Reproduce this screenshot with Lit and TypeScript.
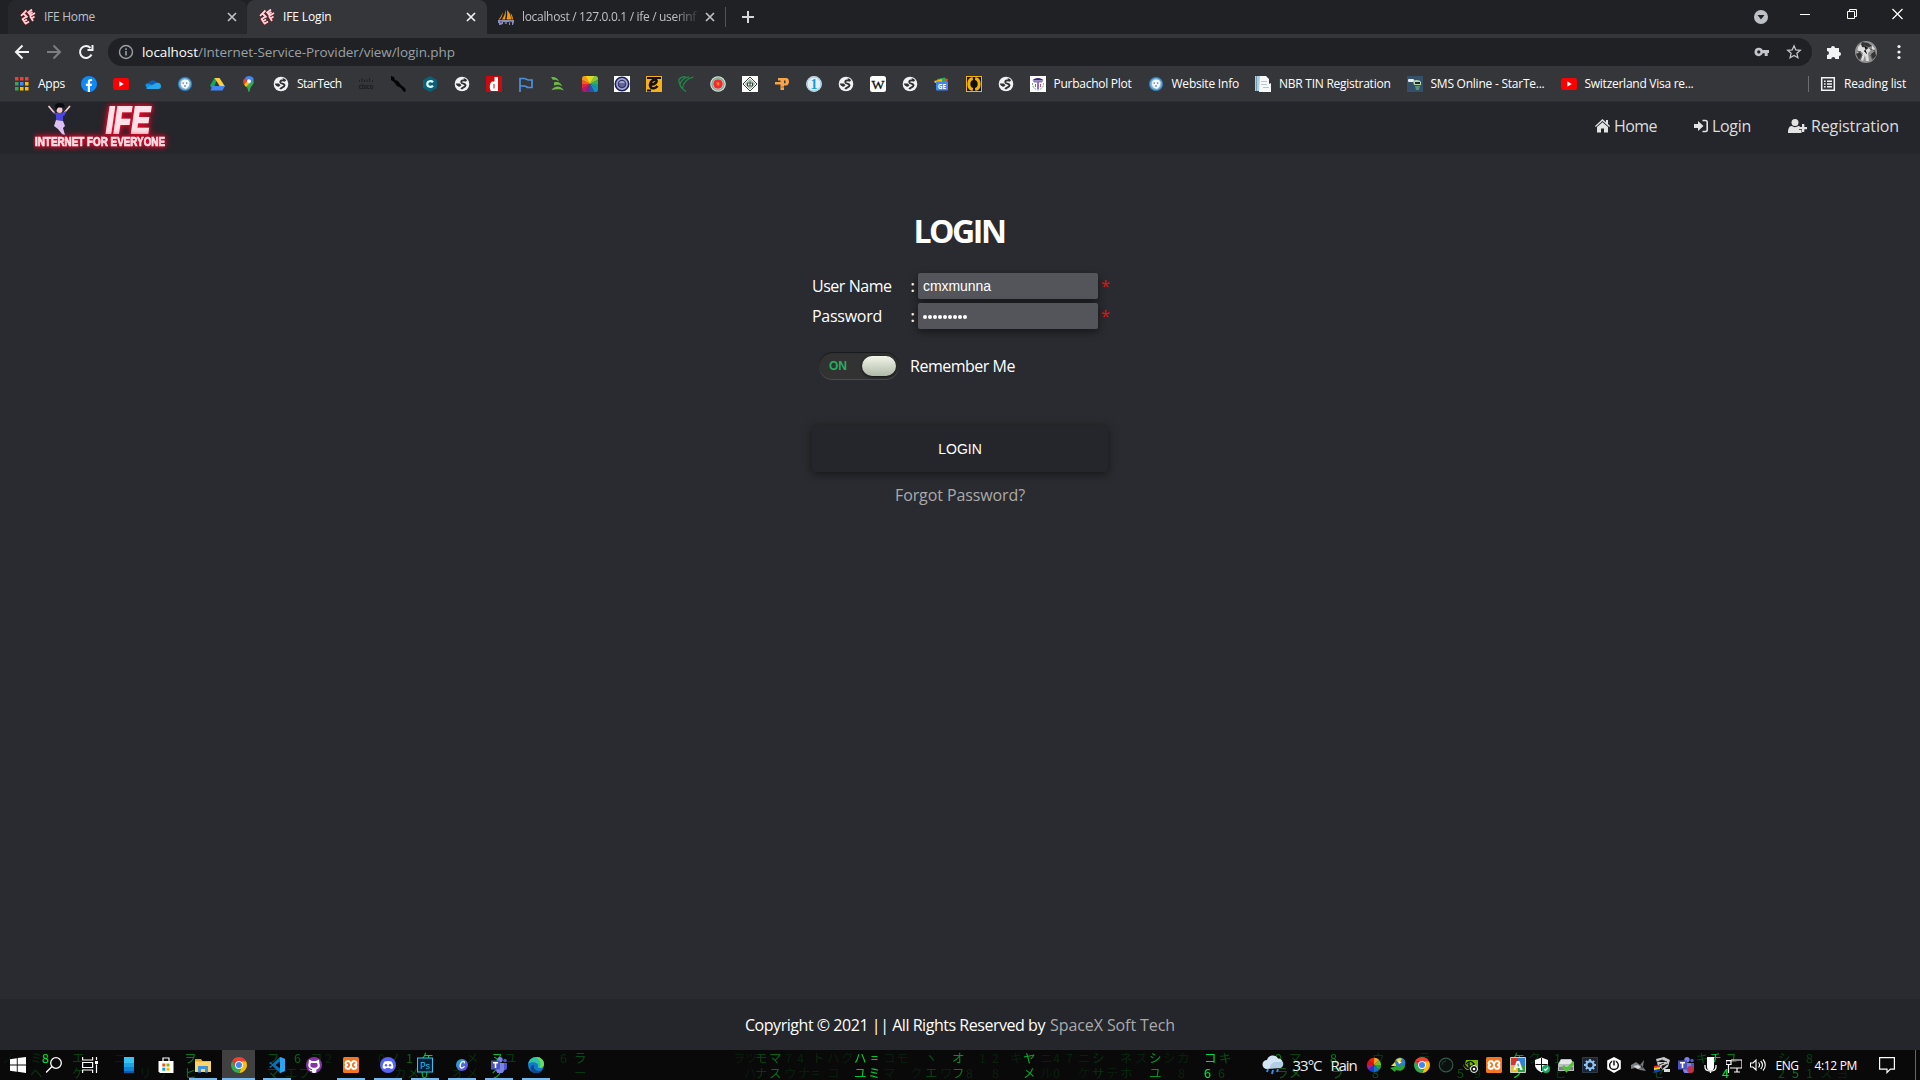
import { LitElement, html, css, svg, type SVGTemplateResult } from "lit";
import { customElement, property } from "lit/decorators.js";

type Icon = SVGTemplateResult;

/** Text run that spreads its letters over a given width. */
@customElement("fit-text")
class FitText extends LitElement {
  static styles = css`
    :host { display: inline-block; white-space: pre; }
  `;
  @property({ type: Number }) w = 0;
  @property() text = "";
  firstUpdated() {
    const el = this.renderRoot.querySelector("span")!;
    const natural = el.getBoundingClientRect().width;
    this.style.width = `${this.w}px`;
    this.style.letterSpacing = `${(this.w - natural) / this.text.length}px`;
  }
  render() {
    return html`<span>${this.text}</span>`;
  }
}

const ico = (body: Icon, size = 16, box = "0 0 16 16", cls = "ico") =>
  html`<svg class=${cls} width=${size} height=${size} viewBox=${box}>${body}</svg>`;

const RAINBOW = ["#f7d417", "#f59a1b", "#ee5a24", "#e0263c", "#b5176b", "#6c2a8f", "#2b54a8", "#1490c4", "#12a08a", "#3fae49", "#8cc63e", "#d0dc2c"].reverse();
const wheel = (colors: string[], r: number) => colors.map((c, i) => {
  const s = (i / colors.length) * Math.PI * 2, e = ((i + 1.05) / colors.length) * Math.PI * 2;
  const p = (a: number) => `${8 + r * Math.sin(a)} ${8 - r * Math.cos(a)}`;
  return svg`<path fill=${c} d="M8 8L${p(s)}A${r} ${r} 0 0 1 ${p(e)}Z"/>`;
});

const ife = svg`<g fill="none" stroke="#7a1420" stroke-width="3.200"><path d="M1.500 6.500 6 2M3 4l4 4M8 4l4-3.500M8 3l3 4M9.500 5 12 3"/><path d="M2.500 10l3 4.500M2 10.500 6 8M3.500 12.500 7 10.500M5 15l4-2.500M10 7l3 5M10 7l4.500-3M11.500 9.500l3-2"/></g><g fill="none" stroke="#ffd5da" stroke-width="1.800"><path d="M1 6.800 6.500 1.500M3.500 4.500l4 4M7.500 4l4.500-3.500M8 3l3 4M9.500 5 12.500 3"/><path d="M2.500 10l3 4.500M2 10.500 6 8M3.500 12.500 7 10.500M5 15l4-2.500M10 7l3 5M10 7l5-3M11.500 9.500l3-2"/></g>`;
const pma = svg`<path fill="#f89c0e" d="M7.500.500c.5 4 .3 7-.5 10H4c2-3 3.300-6 3.500-10zM9 1c3 2.500 4 6 4 9.500H8.500c.8-3 1-6 .5-9.500zM4.500 3c.2 3-.8 5.500-2.500 7.500H.500c2-2 3.300-4.500 4-7.500zM12.500 4c1.800 2 2.300 4 2.500 6.500h-1.500c0-2.500-.3-4.500-1-6.500z"/><path fill="#8b8fb5" d="M0 11h16v2l-1 3h-1v-3h-2v3h-1v-3H9v2H7v-2H5v2l-3 1H1v-2H0z"/><path stroke="#414570" d="M2 13h2M6 14h3M11 13h3"/>`;
const yt = svg`<rect x="0" y="2" width="16" height="12" rx="2.500" fill="#f00"/><path fill="#fff" d="M6.300 5.300v5.400L10.700 8z"/>`;
const globe = svg`<circle cx="8" cy="8" r="7.300" fill="#f1f3f4"/><path fill="none" stroke="#303134" stroke-width="1.900" stroke-linejoin="round" d="M12.300 4.700C10 4.200 6.800 4 7.300 6.400c.4 1.700 4.300.7 4.200 3-.1 2-3.300 1.700-4.300 3.700"/><path fill="#303134" d="M1.800 7.500h4l1.700 1.700-1.700 1.500c-2 0-3.700-1.200-4-3.200zM9.500 2l2.500 1 1.300 2-3-.5z"/>`;
const fb = svg`<circle cx="8" cy="8" r="8" fill="#1189f5"/><path fill="#fff" d="M6.800 16V9.900H4.900V7.700h1.900V6c0-2 1.100-3 2.900-3 .7 0 1.400.1 1.400.1v1.800h-.9c-.9 0-1.200.6-1.200 1.200v1.600h2.100l-.4 2.200H9V16z"/>`;
const onedrive = svg`<path fill="#0a5cb8" d="M3 8a5 5 0 0 1 9.200-1L8 10z"/><path fill="#1490df" d="M3.500 7.500 14 12H3A3 3 0 0 1 .5 9c0-1.200 1.300-1.600 3-1.500z"/><path fill="#28a8ea" d="M1 12l10-5c3-1 5 .5 5 3a2.700 2.700 0 0 1-2.700 3H3.500C2.300 13 1.500 12.700 1 12z"/>`;
const robot = svg`<radialGradient id="rob"><stop offset=".4" stop-color="#c6e2ee"/><stop offset=".75" stop-color="#5fa3cc"/><stop offset="1" stop-color="#123f70"/></radialGradient><circle cx="8" cy="8" r="7.600" fill="url(#rob)"/><path fill="#f2f7f9" d="M4.500 5l2.500-1.500 4 .5 1.500 2.500-1 4-2.500 2.500-3.500-1.500-1.500-3z"/><path fill="#4d6b80" d="M5.500 6.500h1.300v1.200H5.500zM9 6.500h1.300v1.200H9zM7 9.500h2v1H7z"/>`;
const drive = svg`<path fill="#11a861" d="M5.500 2h3L4 14l-3-4.500z"/><path fill="#ffcf3f" d="M5.500 2h5L16 10.500h-5z"/><path fill="#4285f4" d="M3.500 10H16l-2.500 4.500H1.500z"/><path fill="#35363a" d="M8 6.500 6 10h4z"/>`;
const maps = svg`<path fill="#34a853" d="M3 8l9-5c2 4-.5 6-2.200 8.300C9 12.500 8.900 16 8 16s-1-3-2-4.500C5 10 3.700 9.500 3 8z"/><path fill="#4285f4" d="M8 0a5.200 5.200 0 0 1 4.800 3.300L7.500 9 4 2c1-1.300 2.400-2 4-2z"/><path fill="#ea4335" d="M4 2l3 3-3.800 4A5.500 5.500 0 0 1 4 2z"/><path fill="#fbbc04" d="M3.200 8.500 6.500 5 9 7l-4 4c-.8-.9-1.400-1.500-1.800-2.500z"/><circle cx="8" cy="5.200" r="1.900" fill="#fff"/>`;
const cisco = svg`<path stroke="#1f2023" d="M1.500 4v2M4 2v4M6.500 3.500V6M9 3.500V6M11.500 2v4M14.500 4v2"/><text x=".5" y="13" font-size="6.500" font-weight="700" textLength="15" fill="#1c1d20">cisco</text>`;
const shoe = svg`<path fill="#050505" d="M1 0l3 1 1 3 3 1 3 4 4 3 1 3-2 1-3-4-4-2-3-4-3-2z"/>`;
const hexC = svg`<path fill="#0d6078" d="M8 0l7 4v8l-7 4-7-4V4z"/><path fill="none" stroke="#dff" stroke-width="2.200" d="M11 6.200C9.500 4.500 5.300 4.900 5.300 8s4.200 3.500 5.700 1.800"/>`;
const dIcon = svg`<path fill="#c90a10" d="M0 0h16v16H0z"/><path fill="#fff" fill-rule="evenodd" d="M8.500 1H12v14H5c-2-3-1.500-8 1-9.500h2.500zM7.500 8v4.500h1V8z"/>`;
const flag = svg`<path fill="none" stroke="#4d90e0" stroke-width="1.700" d="M2 16V2.500h4.500c1.500 0 2 1.500 4 1.500H14v7.500h-3.500c-2 0-2-1.500-4-1.500H2"/>`;
const leaf = svg`<path fill="#6dbb45" d="M1 1c4-.5 7 1 8 4.500C7 4 5 3.500 3 4zM4 6.500c4-1.500 7 .5 8.500 4C10 8.500 7 8.500 4 9.500zM1.500 14c3-4.500 9-5 12.500.5-3-1.500-8-1.500-12.500-.5z"/>`;
const rainbow = svg`<clipPath id="rb"><rect width="16" height="16" rx="2.500"/></clipPath><g clip-path="url(#rb)">${wheel(RAINBOW, 14)}</g>`;
const seal = svg`<path fill="#fff" d="M0 0h16v16H0z"/><circle cx="8" cy="8" r="6.700" fill="#a6abcc" stroke="#1c1e62" stroke-width="1.600"/><circle cx="8" cy="8" r="3.700" fill="none" stroke="#343875" stroke-width="1.300"/><path stroke="#1c1e62" d="M5 8h6M5 10h6"/>`;
const eIcon = svg`<path fill="#f9ae1b" d="M0 0h16v16H0z"/><path fill="none" stroke="#111" stroke-width="2.600" d="M5 8.500C10 8.500 12.500 4 9 3.700 5.500 3.800 3 8 4.600 11c1.500 2.300 5 1.200 7-1"/><path stroke="#111" stroke-width="2" d="M1 2h14M1 14.500h4"/>`;
const arcs = svg`<g fill="none" stroke="#1f8a48" stroke-width="1.300"><path d="M.8 3.500C2.500 1.500 5 .8 7.500.7M2 8.500C3 4.500 6.500 1.500 11 .8M4.500 12.500C5 7 9 2.200 15.500 1.200M.8 3.500C.8 9 4 13 8 15.500"/></g>`;
const bd = svg`<circle cx="8" cy="8" r="7.800" fill="#d8e6df"/><circle cx="8" cy="8" r="6" fill="none" stroke="#7cae98" stroke-width="1.500"/><circle cx="8" cy="8" r="4.800" fill="#ee2b31"/><path fill="#f58220" d="M6.500 6l2.500.500.5 1.500-.8 2-1.700-1z"/>`;
const diamond = svg`<path fill="#fff" d="M0 0h16v16H0z"/><g fill="none" stroke="#34403a"><path d="M8 1l7 7-7 7-7-7z"/><path stroke="#4c8b65" d="M8 3.500 12.500 8 8 12.500 3.500 8z"/><path d="M5.500 7h5v3h-5zM8 5v5"/></g>`;
const pIcon = svg`<path fill="#f5a54a" fill-rule="evenodd" d="M4 2h8c2.500 0 3 2 3 3.700S14 9.500 12 9.500h-2V14H6.500V8.500H1V6h5.500V4.500H4zM10 4.500v2.700h1.500V4.500z"/><path fill="#b66c20" d="M6.500 10.500H10v1H6.500z"/>`;
const one = svg`<circle cx="8" cy="8" r="7.900" fill="#e4eff5"/><circle cx="8" cy="8" r="7" fill="none" stroke="#8fc8e4"/><text x="8" y="13" font-size="14" font-weight="700" font-family="Liberation Serif" text-anchor="middle" fill="#169bd5">1</text>`;
const wiki = svg`<rect width="16" height="16" rx="2.500" fill="#fff"/><text x="1.500" y="12.500" font-size="13" font-family="Liberation Serif" fill="#111" stroke="#111" stroke-width=".3" textLength="13" lengthAdjust="spacingAndGlyphs">W</text>`;
const news = svg`<path fill="#ea4335" d="M9 2l5 1-1 4H8z"/><path fill="#34a853" d="M3 3l8-1.500 1 4H4z"/><path fill="#fbbc04" d="M0 5l8-2v4H1z"/><rect x="2" y="5.500" width="12" height="9" rx="1" fill="#4285f4"/><text x="8" y="12.500" font-size="6.500" font-weight="700" text-anchor="middle" fill="#fff">GE</text>`;
const codeRing = svg`<path fill="#f5b301" d="M0 0h16v16H0z"/><path fill="#111" d="M1 1h14v14H1z"/><path fill="none" stroke="#f5b301" stroke-width="3" d="M6.800 2.500C1.500 3.500 1.500 12.500 6.800 13.500M9.200 2.500c5.300 1 5.300 10 0 11"/>`;
const purb = svg`<path fill="#fff" d="M0 0h16v16H0z"/><path fill="#38247c" d="M2.500 4.500C4 1 12 1 13.500 4.500z"/><path fill="#8b77bd" d="M3 5h10l-1 1.500H4zM7 6h2v7H7z"/><path fill="none" stroke="#70ae8b" stroke-dasharray="2 1" d="M2.500 7c-.5 3.500 2 6.500 5.500 7 3.500-.5 6-3.500 5.500-7"/><path fill="#c74d77" d="M5 8h1v3H5zM10 8h1v3h-1z"/>`;
const doc = svg`<path fill="#b4ccda" d="M0 0h6v15H0z"/><path fill="#6e9fba" d="M1 0h1v15H1z"/><path fill="#f6f8fa" d="M5 0h6l3 3v5l2-1v9H4z"/><path fill="#b9c6d0" d="M6 5h6v1H6zM6 8h6v1H6zM8 11h6v1H8z"/>`;
const sms = svg`<path fill="#35506a" d="M0 0h16v16H0z"/><rect x="1" y="3" width="6" height="3" rx="1" fill="#e6eef2"/><path fill="#b8d8a8" d="M6 5c3-2 7-1 8 1v3H7z"/><path fill="#172a3c" d="M8 6h5v2H8z"/><path fill="#56907f" d="M8 10h5l-1 4H9z"/>`;
const apps = svg`${["#ea4335", "#ea4335", "#ea4335", "#34a853", "#4285f4", "#fbbc04", "#34a853", "#fbbc04", "#fbbc04"].map((c, i) => svg`<rect x=${1 + (i % 3) * 5} y=${1 + Math.floor(i / 3) * 5} width="3.500" height="3.500" fill=${c}/>`)}`;

interface Bookmark { icon: Icon; label?: string; w?: number }
const BOOKMARKS: Bookmark[] = [
  { icon: apps, label: "Apps", w: 27 }, { icon: fb }, { icon: yt }, { icon: onedrive }, { icon: robot },
  { icon: drive }, { icon: maps }, { icon: globe, label: "StarTech", w: 44.500 }, { icon: cisco }, { icon: shoe },
  { icon: hexC }, { icon: globe }, { icon: dIcon }, { icon: flag }, { icon: leaf }, { icon: rainbow },
  { icon: seal }, { icon: eIcon }, { icon: arcs }, { icon: bd }, { icon: diamond }, { icon: pIcon }, { icon: one },
  { icon: globe }, { icon: wiki }, { icon: globe }, { icon: news }, { icon: codeRing }, { icon: globe },
  { icon: purb, label: "Purbachol Plot", w: 78 }, { icon: robot, label: "Website Info", w: 67.500 },
  { icon: doc, label: "NBR TIN Registration", w: 111.500 }, { icon: sms, label: "SMS Online - StarTe...", w: 114 },
  { icon: yt, label: "Switzerland Visa re...", w: 109 },
];

const chrome = svg`<path fill="#ea4335" d="M1.100 4A8 8 0 0 1 15 4.200L8 5z"/><path fill="#fbbc04" d="M15 4.200A8 8 0 0 1 8 16l3-6.500V4.200z"/><path fill="#34a853" d="M1.100 4A8 8 0 0 0 8 16l3-6.500-6 0z"/><path fill="#ea4335" d="M1.100 4 4.500 9.700 6 5z"/><circle cx="8" cy="8" r="3.900" fill="#fff"/><circle cx="8" cy="8" r="3" fill="#4285f4"/>`;
const xampp = svg`<rect width="16" height="16" rx="1.500" fill="#f37623"/><path fill="none" stroke="#fff" stroke-width="1.900" stroke-linejoin="round" d="M8 6.700 6 4.200H4.500a1.600 1.600 0 0 0-.3 3.500v.6a1.600 1.600 0 0 0 .3 3.500H6l2-2.500 2 2.500h1.500a1.600 1.600 0 0 0 .3-3.500v-.6a1.600 1.600 0 0 0-.3-3.500H10L8 6.700v2.600"/>`;
const teams = svg`<circle cx="9" cy="2.800" r="2.700" fill="#7b83eb"/><circle cx="14" cy="3.500" r="1.800" fill="#5059c9"/><path fill="#5059c9" d="M11 6h5v4.500c0 2-1.500 3-3 3z"/><path fill="#7b83eb" d="M5 6h8v6a4 4 0 0 1-8 1z"/><path fill="#4b53bc" d="M0 3.500h9v9H0z"/><path fill="#fff" d="M2 5h5v1.500H5.300V11H3.700V6.500H2z"/>`;

const W = "#fff";
interface Task { icon: Icon; open?: boolean; active?: boolean }
const TASKS: Task[] = [
  { icon: svg`<rect x="3" width="10" height="16" fill="#0b84d8"/><path fill="#38c5f4" d="M3 0h10v6H3z"/><path fill="#1ea3e8" d="M3 6h10v4H3z"/><path fill="#0759a6" d="M3 14h10v2H3z"/>` },
  { icon: svg`<path fill="none" stroke="#fff" stroke-width="1.200" d="M5 4V1h6v3"/><path fill=${W} d="M.5 4h15v12H2L.5 14.500z"/><path fill="#f25022" d="M4.300 6.500h3v3h-3z"/><path fill="#7fba00" d="M8.500 6.500h3v3h-3z"/><path fill="#00a4ef" d="M4.300 10.700h3v3h-3z"/><path fill="#ffb900" d="M8.500 10.700h3v3h-3z"/>` },
  { icon: svg`<path fill="#e8a317" d="M0 2h6l1.500 2H16v4H0z"/><path fill="#fdd566" d="M0 4.500h16V15H0z"/><path fill="#3f95dd" d="M3 9h10v6.500h-3V12H6v3.500H3z"/>`, open: true },
  { icon: chrome, open: true, active: true },
  { icon: svg`<path fill="#0b70b8" d="M11 0l5 2v12l-5 2L3.500 9 1.500 11 0 10l3-2-3-2 1.500-1L3.500 7z"/><path fill="#2aa5ef" d="M11 0l5 2v12l-5 2z"/><path fill="#090909" d="M11 4.500v7L6.500 8z"/>`, open: true },
  { icon: svg`<circle cx="8" cy="8" r="8" fill="#8436a8"/><path fill="#fff" d="M3 2.500 6 4h4l3-1.500.3 3.500c1.500 4-.5 6-3 6.500v3l-2 .5H6.500l-.5-2c-2 .5-2.500-1-3.500-2 1.500 0 2 1.500 3.500 1V12c-3-.5-4.500-3-3.300-6z"/><path fill="#8436a8" d="M5 6h6c1.500 3 .5 4.800-3 4.800S3.500 9 5 6z"/>` },
  { icon: xampp, open: true },
  { icon: svg`<circle cx="8" cy="8" r="8" fill="#5865f2"/><path fill="#fff" d="M4.500 4.500c2.500-.8 4.500-.8 7 0 1.500 2.200 2 4 1.800 6.500-1 .8-2 1-2.500 1L10 11H6l-.8 1c-.8 0-1.700-.3-2.500-1-.2-2.500.3-4.500 1.800-6.500z"/><circle cx="6" cy="8.200" r="1.200" fill="#5865f2"/><circle cx="10" cy="8.200" r="1.200" fill="#5865f2"/>`, open: true },
  { icon: svg`<path fill="#001e36" stroke="#31c5f0" stroke-width="1.100" d="M.5 1h15v14H.5z"/><text x="8" y="11.500" font-size="9.500" text-anchor="middle" fill="#31c5f0">Ps</text>`, open: true },
  { icon: svg`<linearGradient id="cv" x2="1" y2="1"><stop stop-color="#12bfd0"/><stop offset="1" stop-color="#7a2be8"/></linearGradient><circle cx="8" cy="8" r="6" fill="url(#cv)"/><path fill="none" stroke="#fff" stroke-width="1.300" d="M10.300 6.300c.8-1.800-1-2.500-2.500-1.300-1.800 1.300-2.600 5.700-.3 6 1.400.2 2.500-.8 3-1.700"/>`, open: true },
  { icon: teams, open: true },
  { icon: svg`<circle cx="8" cy="8" r="8" fill="#1379c9"/><path fill="#2fc3a8" d="M.3 7C1 3 4 0 8 0c5 0 8 3.500 8 7 0 2.500-2 4-4.500 4C9 11 11 9 9.500 7 7.500 4.500 2.500 4.500.3 7z"/><path fill="#6bdc56" d="M8 0c5 0 8 3.500 8 7 0 2.500-2 4-4.500 4C14 7 12 3 8 0z"/><path fill="#0b4a8c" d="M6 8c-1 3 1.500 6 5 6.300 2 .1 3-.8 4-1.800a8 8 0 0 1-9.500 3C1 13 2 8 6 8z"/>`, open: true },
];

const TRAY: Icon[] = [
  svg`${wheel(["#f2a81d", "#79c026", "#1ea54a", "#1471c9", "#183bd0", "#9a1fa0", "#d4121f", "#ee2111"], 7.200)}`,
  svg`<circle cx="10" cy="6" r="5.500" fill="#2f7fc2"/><path fill="#f5d926" d="M6 3c2-2 5-2 6-1L9 6z"/><path fill="#fff" d="M8 4l4 1-3 2z"/><path fill="#27a52c" d="M0 11l9-3-1 2 7-2c0 5-5 7-9 5l-1 2z"/><path fill="#f2e54a" d="M1 9l4-4 1 4z"/>`,
  chrome,
  svg`<circle cx="8" cy="8" r="6.800" fill="#09120f" stroke="#34584a" stroke-width="1.200"/><path fill="none" stroke="#203d32" d="M4 8a4 4 0 0 1 4-4"/>`,
  svg`<path fill="#76b900" d="M4 3h12v10h-5C7 12 4 9 3 7z"/><path fill="none" stroke="#101010" stroke-width="1.400" d="M4 7c3-4 6-3 8 0-2 3-5 3-6 0M7 4v7"/><path fill="#76b900" d="M1 7c1 3 3 5 7 6H5C3 12 1 9 1 7z"/><circle cx="12" cy="12" r="3.500" fill="#111" stroke="#fff"/><circle cx="12" cy="12" r="1.300" fill="#fff"/>`,
  xampp,
  svg`<path fill="#d9332b" d="M1 1h7v7H1z"/><path fill="#2f84d0" d="M8 1h7v7H8z"/><path fill="#f4b526" d="M1 8h7v7H1z"/><path fill="#2f9c50" d="M8 8h7v7H8z"/><path fill="none" stroke="#c9d6ba" d="M.5.500h15v15H.5z"/><text x="8" y="13" font-size="13" font-weight="700" text-anchor="middle" fill="#fff">A</text>`,
  svg`<path fill="#fff" d="M1 3l6.500-2.500L14 3v5c0 3-3 6-6.500 7.500C4 14 1 11 1 8z"/><path stroke="#111" d="M7.500 1v13M1.500 7.500h12"/><circle cx="12" cy="12" r="4" fill="#16a765"/><path fill="none" stroke="#fff" stroke-width="1.200" d="M10 12l1.500 1.500L14 10.700"/>`,
  svg`<path fill="#babcc0" d="M3 2h10l3 5v7H0V7z"/><path fill="#e6e7e9" d="M3 3h10l2 4H1z"/><path fill="#7c7f84" d="M1 10h14v3H1z"/><path fill="none" stroke="#50c537" stroke-width="3" d="M5 9l3.500 4.500L16 5"/>`,
  svg`<path fill="#1c2633" stroke="#2f3b49" d="M.5.500h15v15H.5z"/><circle cx="8" cy="8" r="3.600" fill="none" stroke="#8cc4f4" stroke-width="2.200"/><path stroke="#8cc4f4" stroke-width="1.800" d="M8 2v2M8 12v2M2 8h2M12 8h2M3.800 3.800l1.500 1.500M10.700 10.700l1.500 1.500M12.200 3.800l-1.500 1.500M5.300 10.700l-1.500 1.500"/>`,
  svg`<path fill="#fff" d="M8 0l6.800 3.500v8.500L8 16l-6.800-4V3.500z"/><circle cx="8" cy="8.300" r="4.300" fill="none" stroke="#111" stroke-width="1.500"/><path stroke="#fff" stroke-width="3.500" d="M8 2.500v4"/><path stroke="#111" stroke-width="1.500" d="M8 3.500v5"/>`,
  svg`<path fill="#777a7e" d="M1 8l5-3 4 3 4-5-1 7 3 4-6-1-5-2-4 1z"/><path fill="#d6d8da" d="M3 9l5-1 3 2-3 2z"/><path fill="#333" d="M10 7l3 3-1 2z"/>`,
  svg`<path fill="#c8c9c8" d="M2 2l8-2 6 3-2 7-5 3-5-4z"/><path stroke="#333" d="M3 5l5-2 5 2M5 8l5-2M8 12V9l6-2"/><path fill="#eb3022" d="M0 9l6-1v2l-6 2z"/><path fill="#f6da27" d="M0 11l6-1v2l-6 2z"/><path fill="#173ad1" d="M0 13l6-1v2l-5 2z"/><path fill="#ddd" d="M10 12h6v3h-6z"/>`,
  svg`${teams}<circle cx="12.500" cy="12.500" r="3.500" fill="#c4314b"/>`,
  svg`<path fill="#fff" d="M5 0h7v10a3.500 3.500 0 0 1-7 0z"/><path fill="none" stroke="#fff" stroke-width="1.300" d="M3 8v2c0 3 2 4 5.500 4S14 13 14 10V8M8.500 14v2"/>`,
  svg`<path fill="none" stroke="#fff" stroke-width="1.200" d="M5 3h11v8H4M8 15h6M11 11v4M0 3.500h5v4H0zM2.500 8v8"/>`,
  svg`<path fill="none" stroke="#fff" stroke-width="1.100" d="M.5 6H3l3-3v10l-3-3H.5zM8.500 5.500c1.300 1.500 1.300 3.500 0 5M10.700 4c2.300 2.300 2.300 5.700 0 8M13 2.500c3 3 3 8 0 11"/>`,
];

/** Falling-code glyphs behind the taskbar: x, row, glyph, opacity. */
const CODE: [number, number, string, number][] = [
  [2, 0, "ノ", .07], [30, 0, "ミ", .15], [30, 1, "ヘ", .2], [42, 0, "8", 1], [72, 0, "エ", .25], [72, 1, "ケ", .25],
  [114, 0, "ニ", .1], [139, 1, "リ", .1], [158, 1, "ナ", .12], [184, 0, "ヲ", .5], [184, 1, "ヒ", .5], [240, 0, "リ", .5], [240, 1, "マ", .6],
  [267, 0, "フ", .3], [267, 1, "マ", .3], [285, 1, "エ", .15], [294, 0, "6", .4], [310, 0, "コ", .2], [298, 1, "フ", .2], [325, 0, "2", .1],
  [378, 0, "0", .12], [388, 0, "ノ", .2], [406, 0, "1", .4], [394, 1, "カ", .12], [407, 1, "メ", .25], [421, 0, "ケ", .9], [421, 1, "0", .8],
  [452, 1, "オ", .15], [466, 0, "メ", .15], [466, 1, "メ", .12], [491, 0, "ヌ", .8], [491, 1, "ク", .8], [504, 0, "ユ", .2], [560, 0, "6", .15], [574, 0, "ラ", .3], [574, 1, "ー", .2],
  [755, 0, "モ", .25], [769, 0, "マ", .4], [755, 1, "ナ", .2], [769, 1, "ス", .45],
  [733, 0, "ヲ", .08], [745, 0, "ツ", .08], [744, 1, "ハ", .08], [785, 0, "7", .09], [797, 0, "4", .1], [784, 1, "ウ", .09], [798, 1, "ナ", .09], [812, 0, "ト", .13], [812, 1, "=", .15],
  [827, 0, "ハ", .09], [841, 0, "ク", .09], [827, 1, "コ", .08], [854, 0, "ハ", .9], [871, 0, "=", 1], [854, 1, "ユ", .85], [868, 1, "ミ", .9],
  [883, 0, "コ", .09], [896, 0, "モ", .09], [883, 1, "マ", .09], [925, 0, "ヽ", .3], [925, 1, "エ", .25], [910, 1, "ク", .08], [952, 0, "オ", .6], [952, 1, "フ", .5], [940, 1, "ワ", .1], [966, 1, "8", .12],
  [979, 0, "1", .09], [992, 0, "2", .1], [992, 1, "8", .1], [1010, 0, "キ", .1], [1023, 0, "ヤ", .75], [1023, 1, "メ", .7], [1040, 0, "ニ", .1], [1040, 1, "ル", .08], [1053, 0, "4", .1], [1053, 1, "0", .1],
  [1066, 0, "7", .1], [1078, 0, "ニ", .1], [1092, 0, "シ", .18], [1078, 1, "ケ", .08], [1092, 1, "サ", .16], [1106, 1, "テ", .08], [1120, 0, "ネ", .13], [1120, 1, "ホ", .13], [1149, 0, "シ", .65], [1149, 1, "ユ", .6],
  [1135, 0, "ス", .1], [1163, 0, "シ", .1], [1177, 0, "カ", .1], [1178, 1, "8", .1], [1204, 0, "コ", .95], [1204, 1, "6", 1], [1219, 0, "キ", .3], [1218, 1, "6", .22],
  [1275, 0, "9", .5], [1276, 1, "ラ", .35], [1289, 0, "マ", .25], [1289, 1, "メ", .4], [1330, 0, "8", .55], [1331, 1, "ラ", .4], [1372, 0, "ウ", .2], [1372, 1, "8", .3], [1418, 0, "ラ", .15],
  [1457, 1, "5", .3], [1474, 1, "9", .18], [1512, 0, "ケ", .7], [1512, 1, "ノ", .9], [1528, 0, "ク", .2], [1554, 0, "1", .3], [1554, 1, "ヒ", .2],
  [1652, 1, "セ", .3], [1696, 0, "キ", .3], [1709, 0, "チ", .9], [1725, 0, "ユ", .5], [1722, 1, "4", 1], [1778, 0, "シ", .25], [1778, 1, "2", .3], [1792, 1, "5", .5], [1806, 0, "8", .25], [1806, 1, "1", .25], [1820, 1, "ス", .15], [1836, 1, "ヨ", .1],
];

@customElement("app-root")
class AppRoot extends LitElement {
  static styles = css`
    :host { display: flex; flex-direction: column; width: 1920px; height: 1080px; overflow: hidden; background: #2a2b30; color: #fff; font-family: "Open Sans", "Noto Sans", sans-serif; }
    * { box-sizing: border-box; }
    svg { display: block; flex: none; }
    .grow { flex: 1; }
    .tabs { display: flex; height: 34px; background: #202124; padding-left: 8px; font-size: 12px; color: #bdc1c6; }
    .tab { display: flex; align-items: center; height: 34px; width: 239px; padding: 0 7px 0 12px; border-radius: 8px 8px 0 0; background: #27282b; }
    .tab.on { width: 240px; padding-right: 8px; background: #35363a; color: #fff; }
    .tab.plain { background: none; width: 239px; padding: 0 7px 0 11px; border-right: 1px solid #505256; border-radius: 0; height: 20px; margin-top: 7px; }
    .tab .label { flex: 1; margin-left: 8px; height: 18px; line-height: 18px; overflow: hidden; white-space: nowrap; margin-right: 6px; }
    .tab.plain .label { margin-right: 3px; }
    .fade { mask-image: linear-gradient(90deg, #000 86%, transparent 101%); }
    .plus { margin: 10px 0 0 15px; }
    .win { display: flex; align-items: flex-start; padding: 7px 17px 0 0; }
    .min { margin: 0 36px 0 32px; }
    .rest { margin-right: 35px; }
    .tool { display: flex; align-items: center; height: 32px; padding-top: 4px; background: #35363a; }
    .nav-ico { margin-left: 14px; }
    .nav-ico + .nav-ico { margin-left: 16px; }
    .omni { display: flex; align-items: center; width: 1704px; height: 28px; margin-left: 14px; padding: 0 10px 0 10px; border-radius: 14px; background: #202124; color: #9aa0a6; font-size: 13.500px; }
    .omni .info { margin-right: 8px; }
    .host { color: #fff; }
    .star { margin-left: 16px; }
    .puz { margin: 0 13px 0 14px; }
    .kebab { margin-left: 14px; }
    .marks { display: flex; align-items: center; height: 36px; padding-left: 6px; background: #35363a; border-bottom: 1px solid #2d2e32; font-size: 12px; }
    .mark { display: flex; align-items: center; gap: 8px; padding: 0 8px; }
    .mark fit-text { line-height: 16px; }
    .reading { display: flex; align-items: center; gap: 8px; height: 16px; border-left: 1px solid #6b6c70; padding: 0 14px 0 11px; }
    .site { display: flex; align-items: center; height: 52px; background: #25262b; color: #ddd; font-size: 16px; padding: 0 21px 0 33px; }
    .logo { align-self: flex-start; }
    .logo text { filter: drop-shadow(0 0 2px #ff0a30) drop-shadow(0 0 3px #c00824); }
    .link { display: flex; align-items: center; gap: 4px; margin-left: 37px; line-height: 20px; padding-bottom: 4px; }
    .main { display: flex; flex-direction: column; align-items: center; flex: 1; background: #2a2b30; font-size: 16px; }
    .title { margin: 56px 2px 0 0; font-size: 32px; font-weight: 700; line-height: 42px; }
    .form { display: flex; flex-direction: column; align-items: stretch; width: 296px; margin-top: 21px; }
    .field { display: flex; height: 26px; margin-bottom: 4px; line-height: 26px; }
    .name { flex: none; width: 98.500px; }
    .colon { flex: none; width: 7.500px; font-weight: 600; }
    .input { flex: none; width: 180px; height: 26px; padding-left: 5px; background: #54555a; border-radius: 2px; box-shadow: 0 3px 9px rgba(0,0,0,.5); font-family: "Liberation Sans", sans-serif; font-size: 14px; line-height: 26px; }
    .dots { display: flex; align-items: center; gap: 1px; padding-top: 1px; }
    .dot { width: 4px; height: 4px; border-radius: 50%; background: #fff; }
    .req { margin-left: 3px; color: #f00c0c; font-size: 16px; line-height: 26px; }
    .remember { display: flex; align-items: center; height: 27px; margin: 19px 0 0 7px; gap: 11px; }
    .switch { display: flex; align-items: center; justify-content: space-between; width: 80px; height: 27px; border-radius: 14px; padding: 0 3px 0 10px; background: #323232; box-shadow: inset 0 1px 1px #17181a, 0 1px 0 #4b4c50; font: 700 12px "Liberation Sans", sans-serif; color: #27ae60; }
    .knob { width: 34px; height: 20px; border-radius: 10px; background: linear-gradient(#f2f6ea, #b0b9a8); box-shadow: 0 1px 3px #111; }
    .submit { display: flex; align-items: center; justify-content: center; height: 46px; margin-top: 47px; border-radius: 3px; background: #25262b; box-shadow: 0 2px 10px rgba(0,0,0,.5); font: 14px "Liberation Sans", sans-serif; }
    .forgot { align-self: center; margin-top: 11.500px; line-height: 22px; color: #aaa; }
    .foot { display: flex; align-items: center; justify-content: center; gap: 5px; height: 51px; background: #25262b; font-size: 16px; padding: 0; }
    .soft { color: #aaa; }
    .bar { position: relative; display: flex; height: 30px; background: #090909; }
    .code { position: absolute; inset: 0; }
    .cells { position: relative; display: flex; height: 30px; width: 100%; }
    .cell { display: flex; align-items: center; justify-content: center; width: 37px; height: 30px; }
    .cell.sys { width: 36px; }
    .cell.sys3 { width: 38px; padding-right: 2px; }
    .cell.open { border-bottom: 2px solid #76b9ed; margin: 0 4px 0 5px; width: 28px; padding: 2px 0 0; }
    .cell.active { background: #404040; margin: 0 3px 0 1px; width: 33px; }
    .weather { display: flex; align-items: center; font-size: 15px; padding-right: 9px; gap: 9px; color: #eee; }
    .tray { display: flex; align-items: center; gap: 8px; }
    .clock { display: flex; align-items: center; font-size: 12px; margin-left: 10px; gap: 16px; }
    .note { margin: 7px 20px 0 22px; }
    .desk { width: 5px; height: 30px; border-left: 1px solid #666; }
  `;

  private closeIcon(c: string) {
    return ico(svg`<path stroke=${c} stroke-width="1.700" d="M4 4l8 8M12 4l-8 8"/>`);
  }

  private chromeWindow() {
    const tri = (d: string, c: string) => ico(svg`<path fill="none" stroke=${c} stroke-width="2" d=${d}/>`, 16, "0 0 16 16", "nav-ico");
    return html`
      <div class="tabs">
        <div class="tab">${ico(ife)}<span class="label"><fit-text .w=${51} text="IFE Home"></fit-text></span>${this.closeIcon("#bdc1c6")}</div>
        <div class="tab on">${ico(ife)}<span class="label"><fit-text .w=${48.5} text="IFE Login"></fit-text></span>${this.closeIcon("#f1f3f4")}</div>
        <div class="tab plain">${ico(pma)}<span class="label fade"><fit-text .w=${174} text="localhost / 127.0.0.1 / ife / userinf"></fit-text></span>${this.closeIcon("#bdc1c6")}</div>
        <svg class="plus" width="14" height="14" viewBox="0 0 14 14"><path stroke="#d5d7da" stroke-width="2" d="M7 1v12M1 7h12"/></svg>
        <span class="grow"></span>
        <div class="win">
          <svg width="14" height="20" viewBox="0 0 14 20"><circle cx="7" cy="10" r="7" fill="#bdc1c6"/><path fill="#202124" d="M3.500 8h7L7 12.500z"/></svg>
          <svg class="min" width="11" height="14" viewBox="0 0 11 14"><path stroke="#fff" d="M0 7.500h10"/></svg>
          <svg class="rest" width="10" height="14" viewBox="0 0 10 14"><path fill="none" stroke="#fff" d="M.5 4.500h7v7h-7zM2.500 4.500v-2h7v7h-2"/></svg>
          <svg width="11" height="14" viewBox="0 0 11 14"><path stroke="#fff" stroke-width="1.200" d="M.5 2l10 10M10.500 2l-10 10"/></svg>
        </div>
      </div>
      <div class="tool">
        ${tri("M15 8H2M8.500 1.500 2 8l6.500 6.500", "#f1f3f4")}${tri("M1 8h13M7.500 1.500 14 8l-6.500 6.500", "#7b7d80")}${tri("M13.500 10.500A6 6 0 1 1 12.500 4M14.500 1v5h-5", "#f1f3f4")}
        <div class="omni">
          <svg class="info" width="16" height="16" viewBox="0 0 16 16"><circle cx="8" cy="8" r="6.500" fill="none" stroke="#9aa0a6" stroke-width="1.400"/><path stroke="#9aa0a6" stroke-width="1.600" d="M8 7v4.500M8 4.300v1.700"/></svg>
          <fit-text class="host" .w=${56} text="localhost"></fit-text><fit-text .w=${257} text="/Internet-Service-Provider/view/login.php"></fit-text>
          <span class="grow"></span>
          ${ico(svg`<path fill="#c2c5c9" fill-rule="evenodd" d="M4.800 3.700A4.200 4.200 0 0 1 8.700 6H15v3h-1.300v3h-3V9.300h-2A4.200 4.200 0 1 1 4.800 3.700zm0 2.600a1.600 1.600 0 1 0 0 3.300 1.600 1.600 0 0 0 0-3.300z"/>`)}
          ${ico(svg`<path fill="none" stroke="#c2c5c9" stroke-width="1.300" d="M8 1.800l1.800 4.100 4.500.4-3.400 3 1 4.400L8 11.400l-3.900 2.300 1-4.400-3.400-3 4.500-.4z"/>`, 16, "0 0 16 16", "star")}
        </div>
        ${ico(svg`<path fill="#f1f3f4" d="M1 4h4a2 2 0 1 1 4 0h4v4a2 2 0 1 1 0 4v3H9.300a2 2 0 0 0-4 0H1v-4a2 2 0 0 0 0-4z"/>`, 16, "0 0 16 16", "puz")}
        <svg width="22" height="22" viewBox="0 0 22 22"><clipPath id="av"><circle cx="11" cy="11" r="11"/></clipPath><g clip-path="url(#av)"><path fill="#909090" d="M0 0h22v22H0z"/><path fill="#333" d="M7 1l6 1 4 3-3 1-4-1-2 2-3-1zM1 13l4-2 2 3-3 5zM16 13l4-3 1 5-4 4z"/><path fill="#ddd" d="M3 6l3-3 1 3 6 1 3 2-3 3 1 8h-3l-1-6-2 6-2-1 2-7-3-2-3 2zM17 4l3 4-3 2z"/><path stroke="#555" d="M9 4l4 3-4 3 3 3M2 10l4 1M15 8l5 2M7 14l-2 5M15 14l3 4"/></g></svg>
        <svg class="kebab" width="16" height="16" viewBox="0 0 16 16"><g fill="#f1f3f4"><circle cx="8" cy="2.500" r="1.600"/><circle cx="8" cy="8" r="1.600"/><circle cx="8" cy="13.500" r="1.600"/></g></svg>
      </div>
      <div class="marks">
        ${BOOKMARKS.map((b) => html`<div class="mark">${ico(b.icon)}${b.label ? html`<fit-text .w=${b.w!} text=${b.label}></fit-text>` : ""}</div>`)}
        <span class="grow"></span>
        <div class="reading">${ico(svg`<path fill="none" stroke="#f1f3f4" stroke-width="1.500" d="M1.700 1.700h12.600v12.600H1.700z"/><path stroke="#f1f3f4" stroke-width="1.600" d="M4 5.200h1.600M7 5.200h5M4 8h1.600M7 8h5M4 10.800h1.600M7 10.800h5"/>`)}<fit-text .w=${62} text="Reading list"></fit-text></div>
      </div>`;
  }

  private siteHeader() {
    return html`<div class="site">
      <svg class="logo" width="140" height="50" viewBox="0 0 140 50" font-family="Liberation Sans" font-weight="700">
        <text x="73" y="31" font-size="36" font-style="italic" textLength="44" lengthAdjust="spacingAndGlyphs" fill="#ffe3e8" stroke="#ffe3e8" stroke-width="2">IFE</text>
        <text x="2" y="44" font-size="12" textLength="130" lengthAdjust="spacingAndGlyphs" fill="#ffe3e8" stroke="#ffe3e8" stroke-width=".7">INTERNET FOR EVERYONE</text>
        <path fill="none" stroke="#f2c9cf" stroke-width="1.800" d="M15.500 4l6 7M37 4l-6 7"/><circle cx="26.500" cy="8" r="3" fill="#f2c9cf"/><path fill="#0a0a10" d="M22 3l3-2 5 .5 2 3-2 1-5 0-2 3z"/><path fill="#4a44e0" d="M19 10l4 1h6l4-2-1 4-2 1v5l-7-1v-5z"/><path fill="#dcc0f5" d="M23 18l7 1 2 5-2 2 2 7-3-1-4-5-4-3z"/>
      </svg>
      <span class="grow"></span>
      <div class="link"><svg width="15" height="14" viewBox="0 0 15 14"><path fill="#e3e3e3" d="M7.500 0 11 3.200V1h2v4L15 7l-.8.900L7.500 2 .8 7.900 0 7zM7.500 3.300 13 8v5.500H9V9.500H6v4H2V8z"/></svg><fit-text .w=${43} text="Home"></fit-text></div>
      <div class="link"><svg width="14" height="14" viewBox="0 0 14 14"><path fill="#e3e3e3" d="M0 5h4V2l5.500 5L4 12V9H0z"/><path fill="none" stroke="#e3e3e3" stroke-width="1.600" d="M8.500 1.500h3c1.200 0 1.700.5 1.700 1.700v7.600c0 1.200-.5 1.700-1.700 1.700h-3"/></svg><fit-text .w=${39} text="Login"></fit-text></div>
      <div class="link"><svg width="19" height="14" viewBox="0 0 19 14"><circle cx="7" cy="3.500" r="3.500" fill="#e3e3e3"/><path fill="#e3e3e3" d="M0 14c0-4 1-7 3.500-7C6 8.500 8 8.500 10.500 7c.7 0 1.300.3 1.800 1H11v3h2.500v3zM14 5h2.300v3H19v2.200h-2.700V13H14v-2.800h-3V8h3z"/></svg><fit-text .w=${88} text="Registration"></fit-text></div>
    </div>`;
  }

  render() {
    return html`
      ${this.chromeWindow()}
      ${this.siteHeader()}
      <div class="main">
        <h1 class="title"><fit-text .w=${91} text="LOGIN"></fit-text></h1>
        <div class="form">
          <div class="field"><span class="name"><fit-text .w=${79.5} text="User Name"></fit-text></span><span class="colon">:</span><div class="input"><fit-text .w=${68} text="cmxmunna"></fit-text></div><span class="req">*</span></div>
          <div class="field"><span class="name"><fit-text .w=${70} text="Password"></fit-text></span><span class="colon">:</span><div class="input dots">${Array.from({ length: 9 }, () => html`<i class="dot"></i>`)}</div><span class="req">*</span></div>
          <div class="remember"><div class="switch"><span>ON</span><i class="knob"></i></div><fit-text .w=${105} text="Remember Me"></fit-text></div>
          <div class="submit">LOGIN</div>
          <div class="forgot"><fit-text .w=${130} text="Forgot Password?"></fit-text></div>
        </div>
      </div>
      <div class="foot"><fit-text .w=${300} text="Copyright © 2021 || All Rights Reserved by"></fit-text><fit-text class="soft" .w=${125} text="SpaceX Soft Tech"></fit-text></div>
      <div class="bar">
        <svg class="code" width="1920" height="30" font-family="Noto Sans CJK JP" font-size="12.500">${CODE.map(([x, r, g, o]) => svg`<text x=${x} y=${r ? 27.5 : 13} fill="#00e83c" opacity=${o}>${g}</text>`)}</svg>
        <div class="cells">
          <div class="cell sys">${ico(svg`<path fill="#fff" d="M0 2.200 6.800 1.200v6.300H0zM7.700 1.100 16 0v7.500H7.700zM0 8.400h6.800v6.300L0 13.800zM7.700 8.400H16V16l-8.300-1.200z"/>`)}</div>
          <div class="cell sys">${ico(svg`<circle cx="10" cy="6" r="5.300" fill="none" stroke="#fff" stroke-width="1.300"/><path stroke="#fff" stroke-width="1.400" d="M6 9.500 0 15.500"/>`)}</div>
          <div class="cell sys3">${ico(svg`<path fill="none" stroke="#fff" stroke-width="1.200" d="M.6 0v3h10V0M.6 16v-3h10v3M.6 5.500h10v5H.6zM14.500 0v3M14.500 7.500V16"/><path fill="#fff" d="M13 4h3v3h-3z"/>`)}</div>
          ${TASKS.map((t) => html`<div class="cell ${t.open ? "open" : ""} ${t.active ? "active" : ""}">${ico(t.icon)}</div>`)}
          <span class="grow"></span>
          <div class="weather">
            <svg width="22" height="20" viewBox="0 0 22 20"><path fill="#d4e6f5" d="M5 14a4.500 4.500 0 0 1 0-9 6 6 0 0 1 11-1.500A5 5 0 0 1 18 13z"/><path fill="#b2cde6" d="M8 13c0-4 3-6 6-6h7c1 4-1 6-4 6z"/><path stroke="#2f8fe8" stroke-width="2" d="M6 14l-1 3M11 15l-1 4M16 14l-1 3"/></svg>
            <fit-text .w=${29} text="33°C"></fit-text><fit-text .w=${26} text="Rain"></fit-text>
          </div>
          <div class="tray">${TRAY.map((t) => ico(t))}</div>
          <div class="clock"><fit-text .w=${23} text="ENG"></fit-text><fit-text .w=${42.5} text="4:12 PM"></fit-text></div>
          <svg class="note" width="16" height="17" viewBox="0 0 16 17"><path fill="none" stroke="#fff" stroke-width="1.200" d="M.6.600h14.800v11.500h-4L8 15.500v-3.400H.6z"/></svg>
          <i class="desk"></i>
        </div>
      </div>`;
  }
}
